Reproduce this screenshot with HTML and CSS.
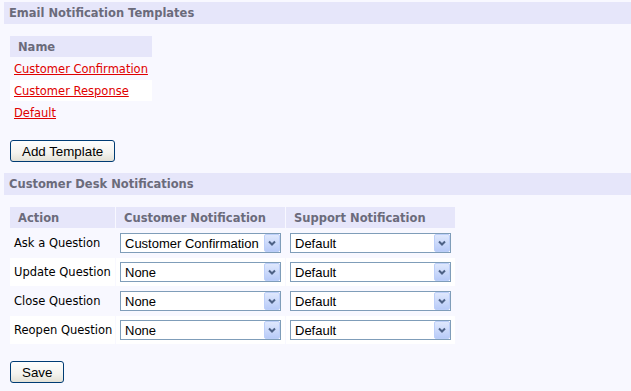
FILE: index.html
```html
<!DOCTYPE html>
<html lang="en">
<head>
  <meta charset="UTF-8" />
  <title>Notification Templates</title>
  <link rel="stylesheet" href="styles.css">
</head>
<body>

<div class="section-title">Email Notification Templates</div>
<table class="grid templates">
  <tr><th>Name</th></tr>
  <tr><td><a href="#">Customer Confirmation</a></td></tr>
  <tr class="alt"><td><a href="#">Customer Response</a></td></tr>
  <tr><td><a href="#">Default</a></td></tr>
</table>
<div class="actions"><button class="btn">Add Template</button></div>

<div class="section-title">Customer Desk Notifications</div>
<table class="grid notify">
  <tr>
    <th class="col-action">Action</th>
    <th class="col-select">Customer Notification</th>
    <th class="col-select">Support Notification</th>
  </tr>
  <tr>
    <td>Ask a Question</td>
    <td>
      <span class="combo">
        <select><option selected>Customer Confirmation</option><option>Customer Response</option><option>Default</option><option>None</option></select>
        <span class="drop"><svg width="8" height="6" viewBox="0 0 8 6"><path d="M1 1.5 L4 4.5 L7 1.5" fill="none" stroke="#4d6185" stroke-width="2"/></svg></span>
      </span>
    </td>
    <td>
      <span class="combo">
        <select><option selected>Default</option><option>Customer Confirmation</option><option>None</option></select>
        <span class="drop"><svg width="8" height="6" viewBox="0 0 8 6"><path d="M1 1.5 L4 4.5 L7 1.5" fill="none" stroke="#4d6185" stroke-width="2"/></svg></span>
      </span>
    </td>
  </tr>
  <tr class="alt">
    <td>Update Question</td>
    <td>
      <span class="combo">
        <select><option selected>None</option><option>Customer Confirmation</option><option>Default</option></select>
        <span class="drop"><svg width="8" height="6" viewBox="0 0 8 6"><path d="M1 1.5 L4 4.5 L7 1.5" fill="none" stroke="#4d6185" stroke-width="2"/></svg></span>
      </span>
    </td>
    <td>
      <span class="combo">
        <select><option selected>Default</option><option>None</option></select>
        <span class="drop"><svg width="8" height="6" viewBox="0 0 8 6"><path d="M1 1.5 L4 4.5 L7 1.5" fill="none" stroke="#4d6185" stroke-width="2"/></svg></span>
      </span>
    </td>
  </tr>
  <tr>
    <td>Close Question</td>
    <td>
      <span class="combo">
        <select><option selected>None</option><option>Customer Confirmation</option><option>Default</option></select>
        <span class="drop"><svg width="8" height="6" viewBox="0 0 8 6"><path d="M1 1.5 L4 4.5 L7 1.5" fill="none" stroke="#4d6185" stroke-width="2"/></svg></span>
      </span>
    </td>
    <td>
      <span class="combo">
        <select><option selected>Default</option><option>None</option></select>
        <span class="drop"><svg width="8" height="6" viewBox="0 0 8 6"><path d="M1 1.5 L4 4.5 L7 1.5" fill="none" stroke="#4d6185" stroke-width="2"/></svg></span>
      </span>
    </td>
  </tr>
  <tr class="alt">
    <td>Reopen Question</td>
    <td>
      <span class="combo">
        <select><option selected>None</option><option>Customer Confirmation</option><option>Default</option></select>
        <span class="drop"><svg width="8" height="6" viewBox="0 0 8 6"><path d="M1 1.5 L4 4.5 L7 1.5" fill="none" stroke="#4d6185" stroke-width="2"/></svg></span>
      </span>
    </td>
    <td>
      <span class="combo">
        <select><option selected>Default</option><option>None</option></select>
        <span class="drop"><svg width="8" height="6" viewBox="0 0 8 6"><path d="M1 1.5 L4 4.5 L7 1.5" fill="none" stroke="#4d6185" stroke-width="2"/></svg></span>
      </span>
    </td>
  </tr>
</table>
<div class="actions"><button class="btn">Save</button></div>

</body>
</html>
```

FILE: styles.css
```css
body {
  margin: 0;
  padding: 2px 0 0 4px;
  background: #f8f8ff;
  font-family: "DejaVu Sans", Verdana, sans-serif;
  font-size: 11.5px;
  color: #000;
}
.section-title {
  height: 22px;
  line-height: 22px;
  padding-left: 5px;
  margin-bottom: 11px;
  background: #e6e6fa;
  color: #6b6b7b;
  font-weight: bold;
}
.grid {
  border-collapse: separate;
  border-spacing: 1px;
  margin-left: 5px;
}
.grid th {
  height: 21px;
  padding: 0 8px;
  background: #e6e6fa;
  color: #6b6b7b;
  text-align: left;
  white-space: nowrap;
}
.grid td { padding: 0 4px; white-space: nowrap; }
.grid .alt td { background: #fff; }
.templates th { width: 126px; }
.templates td { height: 21px; line-height: 14px; }
.templates a { color: #e00000; }
.notify td { height: 20px; padding: 4px; }
.notify td:first-child { padding-right: 0; }
.notify .col-action { width: 89px; }
.notify .col-select { width: 153px; }

.combo { position: relative; display: inline-block; vertical-align: top; }
.combo select {
  appearance: none;
  -webkit-appearance: none;
  display: block;
  width: 161px;
  height: 20px;
  margin: 0;
  padding: 0 18px 0 4px;
  border: 1px solid #7f9db9;
  border-radius: 0;
  background: #fff;
  color: #000;
  font-family: "Liberation Sans", Arial, sans-serif;
  font-size: 13px;
}
.combo .drop {
  position: absolute;
  top: 1px;
  right: 1px;
  width: 16px;
  height: 18px;
  box-sizing: border-box;
  border: 1px solid #bccff9;
  border-radius: 2px;
  background: linear-gradient(#dfe8fd, #b8cbf8);
  display: flex;
  align-items: center;
  justify-content: center;
  pointer-events: none;
}

.actions { display: flex; margin: 16px 0 11px 6px; }
.btn {
  height: 22px;
  padding: 0 11px;
  border: 1px solid #003c74;
  border-radius: 3px;
  background: linear-gradient(#fefefe, #f4f3ee 60%, #e3e1d6);
  color: #000;
  font-family: "Liberation Sans", Arial, sans-serif;
  font-size: 13.33px;
}
```
